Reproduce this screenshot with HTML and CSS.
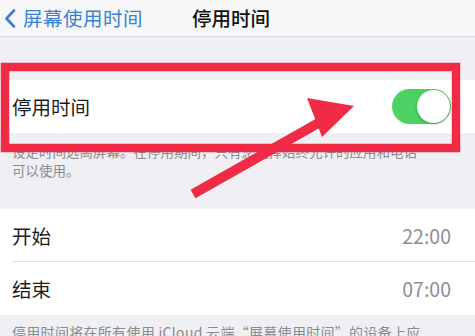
FILE: index.html
```html
<!DOCTYPE html>
<html lang="zh-CN">
<head>
  <meta charset="UTF-8" />
  <title>停用时间</title>
  <meta name="viewport" content="width=device-width, initial-scale=1" />
  <link rel="stylesheet" href="styles.css">
</head>
<body>
  <div class="nav">
    <div class="back">
      <svg class="chevron" width="12" height="19" viewBox="0 0 12 19">
        <polyline points="10,1.5 2.5,9.5 10,17.5" fill="none" stroke="#3a7fd2" stroke-width="2.6" stroke-linecap="round" stroke-linejoin="round" />
      </svg>
      <span>屏幕使用时间</span>
    </div>
    <div class="title">停用时间</div>
  </div>

  <div class="group first">
    <div class="cell">
      <span class="label">停用时间</span>
      <div class="switch on"><div class="knob"></div></div>
    </div>
  </div>
  <div class="footer">设定时间远离屏幕。在停用期间，只有您选择始终允许的应用和电话可以使用。</div>

  <div class="group">
    <div class="cell line">
      <span class="label">开始</span>
      <span class="value">22:00</span>
    </div>
    <div class="cell">
      <span class="label">结束</span>
      <span class="value">07:00</span>
    </div>
  </div>
  <div class="footer last">停用时间将在所有使用 iCloud 云端“屏幕使用时间”的设备上应用。</div>

  <!-- annotation drawn on top of the screenshot -->
  <svg class="markup" width="475" height="336" viewBox="0 0 475 336">
    <rect x="5" y="67" width="451" height="81" fill="none" stroke="#f02b46" stroke-width="8.5" />
    <line x1="193" y1="194" x2="322" y2="121" stroke="#f02b46" stroke-width="10" stroke-linecap="butt" />
    <polygon points="307,98 354,106 322,137" fill="#f02b46" />
  </svg>
</body>
</html>
```

FILE: styles.css
```css
body {
  margin: 0;
  width: 475px;
  height: 336px;
  overflow: hidden;
  position: relative;
  background: #efeff4;
  font-family: "Noto Sans CJK SC", "Noto Sans", sans-serif;
  color: #1c1c1e;
}

.nav {
  height: 37px;
  background: #f7f7f8;
  border-bottom: 1px solid #d9d9de;
  display: flex;
  align-items: center;
  box-sizing: border-box;
}
.back {
  display: flex;
  align-items: center;
  gap: 7px;
  padding-left: 4px;
  color: #3a7fd2;
  font-size: 19.5px;
  line-height: 1;
}
.chevron {
  display: block;
}
.back span {
  letter-spacing: 0.5px;
}
.title {
  margin-left: 49px;
  font-size: 19.5px;
  font-weight: 500;
  line-height: 1;
  color: #111;
}

.group {
  background: #fff;
}
.group.first {
  margin-top: 43px;
}
.cell {
  height: 53px;
  display: flex;
  align-items: center;
  justify-content: space-between;
  padding: 0 24px 0 12px;
  position: relative;
}
.cell.line::after {
  content: "";
  position: absolute;
  left: 12px;
  right: 0;
  bottom: 0;
  height: 1px;
  background: #e0e0e4;
}
.label {
  font-size: 19.5px;
  line-height: 1;
}
.value {
  font-size: 19.5px;
  line-height: 1;
  color: #8e8e93;
}

.switch {
  width: 59px;
  height: 35px;
  border-radius: 18px;
  background: #4bd262;
  position: relative;
}
.knob {
  position: absolute;
  right: 1px;
  top: 1px;
  width: 33px;
  height: 33px;
  border-radius: 50%;
  background: #fff;
  box-shadow: 0 1px 3px rgba(0, 0, 0, 0.25);
}

.footer {
  padding: 9px 55px 29px 12px;
  font-size: 13.5px;
  line-height: 19px;
  color: #8a8a8f;
}
.footer.last {
  padding: 8px 40px 0 12px;
  font-size: 14px;
  letter-spacing: 0.3px;
}

.markup {
  position: absolute;
  left: 0;
  top: 0;
}
```
